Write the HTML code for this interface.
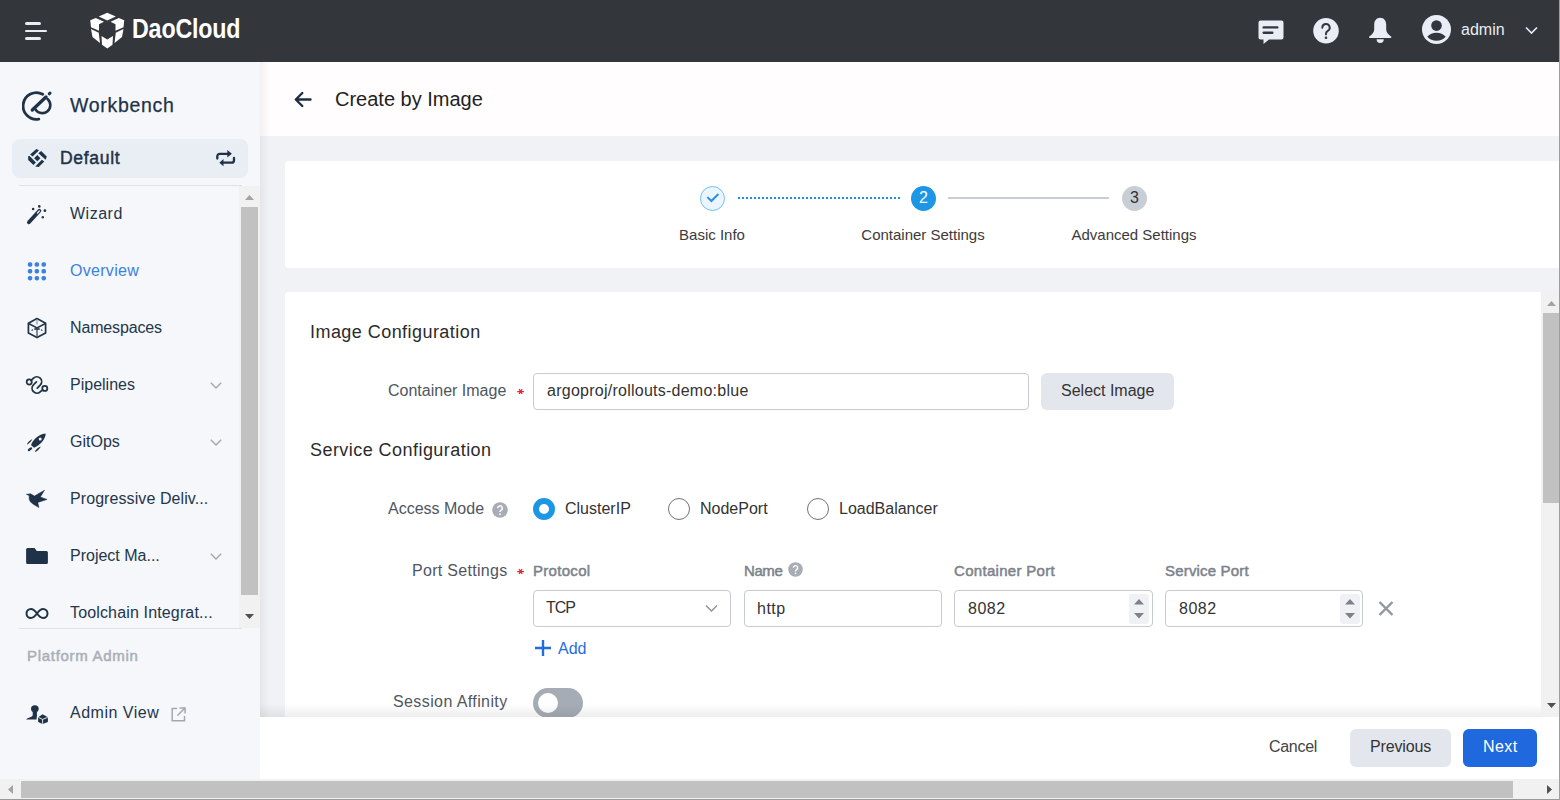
<!DOCTYPE html>
<html><head><meta charset="utf-8">
<style>
*{margin:0;padding:0;box-sizing:border-box}
html,body{width:1560px;height:800px;overflow:hidden;background:#f0f2f5;font-family:"Liberation Sans",sans-serif;color:#333}
.a{position:absolute}
.t{position:absolute;line-height:1;white-space:nowrap}
#hdr{left:0;top:0;width:1560px;height:62px;background:#33363b}
#side{left:0;top:62px;width:260px;height:717px;background:#f5f7fa}
#sideshadow{left:260px;top:62px;width:10px;height:717px;background:linear-gradient(90deg,rgba(0,0,0,0.05),rgba(0,0,0,0))}
#phead{left:260px;top:62px;width:1300px;height:74px;background:#fffdfd}
.card{background:#fff;border-radius:4px}
.mi{color:#24364a;font-size:16px}
.ico{position:absolute}
.lbl{color:#4f5660;font-size:16px}
.req{color:#e5312d;font-size:17px}
.inp{position:absolute;border:1px solid #c6cad3;border-radius:4px;background:#fff}
.th{color:#7d828b;font-size:15px;-webkit-text-stroke:0.5px #7d828b}
.btn2{position:absolute;background:#e3e6ed;border-radius:6px}
.sbtrack{position:absolute;background:#f1f1f1}
.sbthumb{position:absolute;background:#c1c1c1}
</style></head><body>
<!-- header -->
<div id="hdr" class="a"></div>
<div class="a" style="left:25px;top:22px;width:16px;height:3px;border-radius:2px;background:#e9edf5"></div>
<div class="a" style="left:25px;top:30px;width:22px;height:2px;border-radius:1px;background:#e9edf5"></div>
<div class="a" style="left:25px;top:37px;width:16px;height:3px;border-radius:2px;background:#e9edf5"></div>
<svg class="ico" style="left:88px;top:10px" width="40" height="40" viewBox="0 0 40 40">
 <g fill="#fff">
  <polygon points="10.75,6.5 19.25,2.75 27.75,6.5 19.25,10.5"/>
  <polygon points="2.25,10.25 7.75,8 16,11.75 11,14.25 11,20.75 3,17.25"/>
  <polygon points="36.25,10.25 30.75,8 22.5,11.75 27.5,14.25 27.5,20.75 35.5,17.25"/>
  <polygon points="3,19 10.75,22.75 12,33 4.5,27"/>
  <polygon points="35.5,19 27.75,22.75 26.5,33 34,27"/>
  <polygon points="13.5,26 19.25,29.5 25,26 24.5,34.75 19.25,38.5 14,34.75"/>
 </g>
</svg>
<div class="t" style="left:132px;top:15px;font-size:28px;font-weight:bold;color:#fff;transform:scaleX(0.83);transform-origin:0 0;letter-spacing:-0.2px">DaoCloud</div>
<!-- chat -->
<svg class="ico" style="left:1258px;top:20px" width="27" height="25" viewBox="0 0 27 25">
 <path d="M2.5 0.5h21a2 2 0 0 1 2 2v15a2 2 0 0 1-2 2H11l-5.5 4.5v-4.5h-3a2 2 0 0 1-2-2v-15a2 2 0 0 1 2-2z" fill="#e9edf5"/>
 <rect x="4.5" y="6.2" width="16" height="2.4" rx="1.2" fill="#33363b"/>
 <rect x="4.5" y="11.6" width="11" height="2.4" rx="1.2" fill="#33363b"/>
</svg>
<!-- help -->
<svg class="ico" style="left:1313px;top:18px" width="26" height="26" viewBox="0 0 26 26">
 <circle cx="13" cy="12.8" r="12.8" fill="#e9edf5"/>
 <path d="M9.3 9.7a3.7 3.7 0 1 1 5.5 3.2c-1.1.7-1.8 1.3-1.8 2.6v.9" fill="none" stroke="#33363b" stroke-width="1.9" stroke-linecap="round"/>
 <circle cx="13" cy="19.8" r="1.3" fill="#33363b"/>
</svg>
<!-- bell -->
<svg class="ico" style="left:1368px;top:17px" width="25" height="28" viewBox="0 0 25 28">
 <path d="M12.2 0.8C8.6 0.8 6.2 3.7 6.2 7.6V12.6C6.2 15.2 4.6 17.3 1.4 19.6 0.7 20.1 1 21 1.8 21H22.6C23.4 21 23.7 20.1 23 19.6 19.8 17.3 18.2 15.2 18.2 12.6V7.6C18.2 3.7 15.8 0.8 12.2 0.8Z" fill="#e9edf5"/>
 <path d="M8.6 22.3H15.8A3.6 3.6 0 0 1 8.6 22.3Z" fill="#e9edf5"/>
</svg>
<!-- user -->
<svg class="ico" style="left:1422px;top:15px" width="30" height="30" viewBox="0 0 30 30">
 <circle cx="14.5" cy="14.5" r="14.5" fill="#e9edf5"/>
 <circle cx="14.5" cy="10.6" r="5.3" fill="#33363b"/>
 <path d="M5.3 21.7c2.3-2.7 5.5-4 9.2-4s6.9 1.3 9.2 4c-2.3 2.6-5.5 4-9.2 4s-6.9-1.4-9.2-4z" fill="#33363b"/>
</svg>
<div class="t" style="left:1461px;top:22px;font-size:16px;color:#e9edf5">admin</div>
<svg class="ico" style="left:1525px;top:26px" width="13" height="9" viewBox="0 0 13 9">
 <path d="M1 1.5l5.5 5.5 5.5-5.5" fill="none" stroke="#e9edf5" stroke-width="1.6"/>
</svg>

<!-- sidebar -->
<div id="side" class="a"></div>
<!-- workbench -->
<svg class="ico" style="left:22px;top:91px" width="31" height="31" viewBox="0 0 31 31">
 <path d="M20.7 3.3A13.3 13.3 0 1 0 16.8 28.1" fill="none" stroke="#1f3247" stroke-width="2.8" stroke-linecap="round"/>
 <path d="M25.5 7.9A8.1 8.1 0 1 1 13.4 18.4" fill="none" stroke="#1f3247" stroke-width="2.6" stroke-linecap="round"/>
 <path d="M10.3 19L24 6" stroke="#1f3247" stroke-width="3.3" stroke-linecap="round"/>
 <path d="M27.3 2.8L28 2.1" stroke="#1f3247" stroke-width="3" stroke-linecap="round"/>
</svg>
<div class="t" style="left:70px;top:95.6px;font-size:19.5px;color:#1f3247;letter-spacing:0.7px;-webkit-text-stroke:0.25px #1f3247">Workbench</div>
<!-- default -->
<div class="a" style="left:12px;top:139px;width:236px;height:39px;border-radius:8px;background:#e9edf4"></div>
<svg class="ico" style="left:24px;top:144px" width="28" height="28" viewBox="0 0 28 28">
 <g fill="#1f3247">
  <polygon points="6.1,10.5 12.4,4.9 15.05,6.3 8.6,12.6"/>
  <polygon points="14.35,9.3 17.15,7.0 22.75,12.6 21.7,15.75"/>
  <polygon points="17.85,15.75 20.3,17.5 14.7,22.9 11.2,22.4"/>
  <polygon points="4.2,11.9 5.6,12.1 11.9,18.55 9.45,21 4.2,16.1"/>
  <polygon points="10.15,14.2 13.3,11.0 16.45,14.2 13.3,17.3"/>
 </g>
</svg>
<div class="t" style="left:60px;top:149.5px;font-size:17.6px;color:#1f3247;-webkit-text-stroke:0.45px #1f3247;letter-spacing:0.65px">Default</div>
<svg class="ico" style="left:212px;top:145px" width="28" height="26" viewBox="0 0 28 26">
 <path d="M5.3 13.6V11.3a2.5 2.5 0 0 1 2.5-2.5H16.5" fill="none" stroke="#1f3247" stroke-width="2.3" stroke-linecap="round"/>
 <path d="M15.3 5.1L19.9 8.8l-4.6 3.6z" fill="#1f3247"/>
 <path d="M22 13V15.2a2.5 2.5 0 0 1-2.5 2.5H11" fill="none" stroke="#1f3247" stroke-width="2.3" stroke-linecap="round"/>
 <path d="M11.5 14.1L7.3 17.7l4.2 3.6z" fill="#1f3247"/>
</svg>
<div class="a" style="left:19px;top:185px;width:223px;height:1px;background:#dde2ea"></div>
<div class="a" style="left:19px;top:628px;width:223px;height:1px;background:#dde2ea"></div>
<!-- sidebar scrollbar -->
<div class="sbtrack" style="left:239px;top:186px;width:21px;height:442px"></div>
<div class="sbthumb" style="left:241px;top:207px;width:17px;height:388px"></div>
<svg class="ico" style="left:244px;top:194px" width="11" height="7" viewBox="0 0 11 7"><path d="M5.5 1L10 6H1z" fill="#a3a3a3"/></svg>
<svg class="ico" style="left:244px;top:613px" width="11" height="7" viewBox="0 0 11 7"><path d="M1 1h9L5.5 6z" fill="#505050"/></svg>
<!-- menu items -->
<svg class="ico" style="left:22px;top:200px" width="30" height="30" viewBox="0 0 30 30">
 <path d="M6.9 22.3L17.4 10.8" stroke="#1f3247" stroke-width="3.8" stroke-linecap="round"/>
 <path d="M15.4 13.1L17.3 11" stroke="#f5f7fa" stroke-width="1.3" stroke-linecap="round"/>
 <circle cx="11.1" cy="9" r="1.25" fill="#1f3247"/><circle cx="17.3" cy="6.4" r="1.3" fill="#1f3247"/>
 <circle cx="22.9" cy="10.7" r="1.35" fill="#1f3247"/><circle cx="20.8" cy="17.25" r="1.2" fill="#1f3247"/>
</svg>
<div class="t mi" style="left:70px;top:206px;letter-spacing:0.5px">Wizard</div>
<svg class="ico" style="left:22px;top:256px" width="30" height="30" viewBox="0 0 30 30">
 <g fill="#3a81e0">
  <rect x="5.8" y="6.2" width="4.5" height="4.5" rx="1.8"/><rect x="12.6" y="6.2" width="4.5" height="4.5" rx="1.8"/><rect x="19.5" y="6.2" width="4.5" height="4.5" rx="1.8"/>
  <rect x="5.8" y="13" width="4.5" height="4.5" rx="1.8"/><rect x="12.6" y="13" width="4.5" height="4.5" rx="1.8"/><rect x="19.5" y="13" width="4.5" height="4.5" rx="1.8"/>
  <rect x="5.8" y="19.9" width="4.5" height="4.5" rx="1.8"/><rect x="12.6" y="19.9" width="4.5" height="4.5" rx="1.8"/><rect x="19.5" y="19.9" width="4.5" height="4.5" rx="1.8"/>
 </g>
</svg>
<div class="t mi" style="left:70px;top:263px;color:#3a81e0;letter-spacing:0.3px">Overview</div>
<svg class="ico" style="left:22px;top:313px" width="30" height="30" viewBox="0 0 30 30">
 <path d="M15 5.6L23.6 10.3V19.9L15 24.6 6.4 19.9V10.3z" fill="none" stroke="#1f3247" stroke-width="1.7" stroke-linejoin="round"/>
 <path d="M6.6 10.5L15 14.8l8.4-4.3" fill="none" stroke="#1f3247" stroke-width="1.5"/>
 <path d="M15 14.8V24.3" stroke="#4d5b6b" stroke-width="1.4"/>
 <path d="M15 6.5V11.5" stroke="#8892a0" stroke-width="1.1"/>
 <path d="M12.6 15.6L17.4 16.4M17.4 15.6L12.6 16.4" stroke="#1f3247" stroke-width="1"/>
 <path d="M9.6 17.6L12.6 16M20.4 17.6L17.4 16" stroke="#1f3247" stroke-width="1.1" stroke-dasharray="1.6 1.2"/>
</svg>
<div class="t mi" style="left:70px;top:320px;letter-spacing:-0.15px">Namespaces</div>
<svg class="ico" style="left:22px;top:370px" width="30" height="30" viewBox="0 0 30 30">
 <g fill="none" stroke="#1f3247" stroke-width="1.75" stroke-linecap="round">
  <circle cx="7.2" cy="12" r="2.55"/>
  <circle cx="22.8" cy="18.4" r="2.55"/>
  <path d="M9.2 10.4L11.5 8.1A4.85 4.85 0 0 1 18.4 14.9L15.3 18.1"/>
  <path d="M14.4 11.9L11.3 15A4.85 4.85 0 0 0 18.2 21.8L20.8 19.9"/>
 </g>
</svg>
<div class="t mi" style="left:70px;top:377px">Pipelines</div>
<svg class="ico" style="left:210px;top:382px" width="12" height="7" viewBox="0 0 12 7"><path d="M0.8 0.8L6 6l5.2-5.2" fill="none" stroke="#a3a8b0" stroke-width="1.4"/></svg>
<svg class="ico" style="left:22px;top:428px" width="30" height="30" viewBox="0 0 30 30">
 <path d="M9 17.1C10.5 12.5 15.5 6.5 23.7 5.5 23.5 10.5 19 17 12 19.7Z" fill="#1f3247"/>
 <circle cx="18.2" cy="11.1" r="1.5" fill="#f5f7fa"/>
 <path d="M4.9 16.4C5.6 14.6 7.6 12.2 10.3 10.9 9.6 12.6 7.8 15 5.4 16.6Z M13 23.7C13.5 21.8 15.8 19.3 18.8 18.4 18.1 20.2 15.6 22.7 13.4 23.9Z" fill="#1f3247"/>
 <path d="M6.9 22L9.1 20.4" stroke="#1f3247" stroke-width="2.2" stroke-linecap="round"/>
</svg>
<div class="t mi" style="left:70px;top:434px">GitOps</div>
<svg class="ico" style="left:210px;top:439px" width="12" height="7" viewBox="0 0 12 7"><path d="M0.8 0.8L6 6l5.2-5.2" fill="none" stroke="#a3a8b0" stroke-width="1.4"/></svg>
<svg class="ico" style="left:22px;top:484px" width="30" height="30" viewBox="0 0 30 30">
 <path d="M4.3 10.3L8.6 9.8 12.4 12 22.5 6.2 18.4 13.1 25.1 15.4 15.8 18.4 16.9 23.6 11.3 20.3 8.3 17.8 7.2 15.2 7.1 11.6Z" fill="#1f3247" stroke="#1f3247" stroke-width="0.5" stroke-linejoin="round"/>
</svg>
<div class="t mi" style="left:70px;top:491px;letter-spacing:0.08px">Progressive Deliv...</div>
<svg class="ico" style="left:22px;top:541px" width="30" height="30" viewBox="0 0 30 30">
 <path d="M5.6 7.1H12.6L14.8 10H24.4A1.5 1.5 0 0 1 25.9 11.5V21.6A1.5 1.5 0 0 1 24.4 23.1H5.6A1.5 1.5 0 0 1 4.1 21.6V8.6A1.5 1.5 0 0 1 5.6 7.1Z" fill="#1f3348"/>
</svg>
<div class="t mi" style="left:70px;top:548px">Project Ma...</div>
<svg class="ico" style="left:210px;top:553px" width="12" height="7" viewBox="0 0 12 7"><path d="M0.8 0.8L6 6l5.2-5.2" fill="none" stroke="#a3a8b0" stroke-width="1.4"/></svg>
<svg class="ico" style="left:25px;top:607px" width="24" height="13" viewBox="0 0 24 13">
 <path d="M12 6.5C9.9 3.6 8.2 2 6 2a4.5 4.5 0 0 0 0 9c2.2 0 3.9-1.6 6-4.5 2.1-2.9 3.8-4.5 6-4.5a4.5 4.5 0 0 1 0 9c-2.2 0-3.9-1.6-6-4.5z" fill="none" stroke="#1f3247" stroke-width="2"/>
</svg>
<div class="t mi" style="left:70px;top:605px;letter-spacing:0.15px">Toolchain Integrat...</div>
<div class="t" style="left:27px;top:648px;font-size:15px;color:#a9afb8;-webkit-text-stroke:0.5px #a9afb8;letter-spacing:0.7px">Platform Admin</div>
<svg class="ico" style="left:22px;top:699px" width="30" height="30" viewBox="0 0 30 30">
 <ellipse cx="12.85" cy="9.75" rx="3.85" ry="3.6" fill="#1f3247"/>
 <path d="M4.1 20.6C5 19.2 8.6 18.2 10.2 17.3 10.8 16.5 10.9 15.5 10.6 12.8H15.1C14.8 14.4 14.8 15.6 15 16.6L14.5 20.6Z" fill="#1f3247"/>
 <path d="M20.6 15.2L25.9 18.3V22.9L20.6 25 16.1 22.9V18.3Z" fill="#1f3247"/>
 <path d="M16.4 18.4L20.6 20.4 25.6 18.4M20.6 20.4V24.8" fill="none" stroke="#f5f7fa" stroke-width="0.9"/>
</svg>
<div class="t mi" style="left:70px;top:705px;letter-spacing:0.5px">Admin View</div>
<svg class="ico" style="left:171px;top:707px" width="15" height="15" viewBox="0 0 15 15">
 <path d="M6 1.5H1.2v12.3h12.3V9" fill="none" stroke="#a3a8b0" stroke-width="1.5"/>
 <path d="M8.5 0.9h5.6v5.6M14 1L6.5 8.5" fill="none" stroke="#a3a8b0" stroke-width="1.5"/>
</svg>

<!-- page header -->
<div id="phead" class="a"></div>
<div id="sideshadow" class="a"></div>
<!-- page header content -->
<svg class="ico" style="left:294px;top:91px" width="18" height="17" viewBox="0 0 18 17">
 <path d="M16.5 8.5H2.5M8.3 2L1.8 8.5 8.3 15" fill="none" stroke="#1d2e42" stroke-width="2.4" stroke-linecap="round" stroke-linejoin="round"/>
</svg>
<div class="t" style="left:335px;top:89px;font-size:20px;color:#1f1f1f">Create by Image</div>

<!-- stepper card -->
<div class="a card" style="left:285px;top:161px;width:1280px;height:107px"></div>
<div class="a" style="left:700px;top:186px;width:25px;height:25px;border-radius:50%;border:1px solid #72c2f3;background:#eaf5fd"></div>
<svg class="ico" style="left:700px;top:186px" width="25" height="25" viewBox="0 0 25 25"><path d="M7.4 11.1l4 3.9 7-7" fill="none" stroke="#2b8fe6" stroke-width="2"/></svg>
<div class="a" style="left:738px;top:197px;width:162px;height:2px;background:repeating-linear-gradient(90deg,#1b8fe4 0 2px,transparent 2px 4px)"></div>
<div class="a" style="left:911px;top:186px;width:25px;height:25px;border-radius:50%;background:#1e96e6"></div>
<div class="t" style="left:911px;top:189.5px;width:25px;text-align:center;font-size:16px;color:#fff">2</div>
<div class="a" style="left:948px;top:197px;width:161px;height:2px;background:#c9cdd6"></div>
<div class="a" style="left:1122px;top:186px;width:25px;height:25px;border-radius:50%;background:#c9cdd6"></div>
<div class="t" style="left:1122px;top:189.5px;width:25px;text-align:center;font-size:16px;color:#333">3</div>
<div class="t" style="left:612px;top:227px;width:200px;text-align:center;font-size:15px;color:#3b3b3b">Basic Info</div>
<div class="t" style="left:823px;top:227px;width:200px;text-align:center;font-size:15px;color:#3b3b3b">Container Settings</div>
<div class="t" style="left:1034px;top:227px;width:200px;text-align:center;font-size:15px;color:#3b3b3b">Advanced Settings</div>

<!-- form card -->
<div class="a card" style="left:285px;top:292px;width:1280px;height:430px"></div>
<div class="t" style="left:310px;top:323px;font-size:18px;color:#2b2b2b;letter-spacing:0.45px">Image Configuration</div>
<div class="t lbl" style="left:388px;top:383px">Container Image</div>
<svg class="ico" style="left:517px;top:388px" width="8" height="6" viewBox="0 0 8 6"><path d="M0.2 3.5H7M2.1 1L5.1 6M5.1 1L2.1 6" stroke="#e8262b" stroke-width="1.25"/></svg>
<div class="inp" style="left:533px;top:373px;width:496px;height:37px"></div>
<div class="t" style="left:547px;top:383px;font-size:16px;color:#333;letter-spacing:0.25px">argoproj/rollouts-demo:blue</div>
<div class="btn2" style="left:1041px;top:373px;width:133px;height:37px"></div>
<div class="t" style="left:1061px;top:383px;font-size:16px;color:#333">Select Image</div>

<div class="t" style="left:310px;top:441px;font-size:18px;color:#2b2b2b;letter-spacing:0.45px">Service Configuration</div>
<div class="t lbl" style="left:388px;top:501px">Access Mode</div>
<svg class="ico" style="left:492px;top:502px" width="16" height="16" viewBox="0 0 16 16">
 <circle cx="8" cy="8" r="7.8" fill="#a8acb4"/>
 <path d="M5.7 6.2a2.3 2.3 0 1 1 3.4 2c-.7.4-1.1.8-1.1 1.5v.4" fill="none" stroke="#fff" stroke-width="1.5"/>
 <circle cx="8" cy="12.2" r="0.9" fill="#fff"/>
</svg>
<div class="a" style="left:533px;top:498px;width:22px;height:22px;border-radius:50%;border:6px solid #1e96e6;background:#fff"></div>
<div class="t" style="left:565px;top:501px;font-size:16px;color:#333">ClusterIP</div>
<div class="a" style="left:668px;top:498px;width:22px;height:22px;border-radius:50%;border:1px solid #6e737a;background:#fff"></div>
<div class="t" style="left:700px;top:501px;font-size:16px;color:#333">NodePort</div>
<div class="a" style="left:807px;top:498px;width:22px;height:22px;border-radius:50%;border:1px solid #6e737a;background:#fff"></div>
<div class="t" style="left:839px;top:501px;font-size:16px;color:#333">LoadBalancer</div>

<div class="t lbl" style="left:412px;top:563px;letter-spacing:0.3px">Port Settings</div>
<svg class="ico" style="left:517px;top:568px" width="8" height="6" viewBox="0 0 8 6"><path d="M0.2 3.5H7M2.1 1L5.1 6M5.1 1L2.1 6" stroke="#e8262b" stroke-width="1.25"/></svg>
<div class="t th" style="left:533px;top:563px;letter-spacing:0.3px">Protocol</div>
<div class="t th" style="left:744px;top:563px;letter-spacing:-0.4px">Name</div>
<svg class="ico" style="left:788px;top:562px" width="15" height="15" viewBox="0 0 16 16">
 <circle cx="8" cy="8" r="7.8" fill="#a8acb4"/>
 <path d="M5.7 6.2a2.3 2.3 0 1 1 3.4 2c-.7.4-1.1.8-1.1 1.5v.4" fill="none" stroke="#fff" stroke-width="1.5"/>
 <circle cx="8" cy="12.2" r="0.9" fill="#fff"/>
</svg>
<div class="t th" style="left:954px;top:563px;letter-spacing:0.3px">Container Port</div>
<div class="t th" style="left:1165px;top:563px;letter-spacing:0.18px">Service Port</div>

<div class="inp" style="left:533px;top:590px;width:198px;height:37px"></div>
<div class="t" style="left:546px;top:600px;font-size:16px;color:#333;letter-spacing:-1px">TCP</div>
<svg class="ico" style="left:705px;top:604px" width="13" height="9" viewBox="0 0 13 9"><path d="M1 1.5l5.5 5.5 5.5-5.5" fill="none" stroke="#8a8f98" stroke-width="1.3"/></svg>
<div class="inp" style="left:744px;top:590px;width:198px;height:37px"></div>
<div class="t" style="left:757px;top:601px;font-size:16px;color:#333;letter-spacing:0.5px">http</div>
<div class="inp" style="left:954px;top:590px;width:199px;height:37px"></div>
<div class="t" style="left:968px;top:600.6px;font-size:16px;color:#333;letter-spacing:0.5px">8082</div>
<div class="a" style="left:1129px;top:594px;width:20px;height:30px;border-radius:3px;background:#f0f1f4"></div>
<svg class="ico" style="left:1129px;top:594px" width="20" height="30" viewBox="0 0 20 30">
 <path d="M5 10.5l5-5.5 5 5.5z M5 19l5 5.5 5-5.5z" fill="#7d828a"/>
</svg>
<div class="inp" style="left:1165px;top:590px;width:198px;height:37px"></div>
<div class="t" style="left:1179px;top:600.6px;font-size:16px;color:#333;letter-spacing:0.5px">8082</div>
<div class="a" style="left:1340px;top:594px;width:20px;height:30px;border-radius:3px;background:#f0f1f4"></div>
<svg class="ico" style="left:1340px;top:594px" width="20" height="30" viewBox="0 0 20 30">
 <path d="M5 10.5l5-5.5 5 5.5z M5 19l5 5.5 5-5.5z" fill="#7d828a"/>
</svg>
<svg class="ico" style="left:1378px;top:601px" width="16" height="15" viewBox="0 0 16 15">
 <path d="M1.5 1l13 13M14.5 1l-13 13" stroke="#9196a0" stroke-width="2.4"/>
</svg>
<svg class="ico" style="left:534px;top:639px" width="18" height="18" viewBox="0 0 18 18">
 <path d="M9 1v16M1 9h16" stroke="#1f6ddf" stroke-width="2.4"/>
</svg>
<div class="t" style="left:558px;top:641px;font-size:16px;color:#1f6ddf">Add</div>

<div class="t lbl" style="left:393px;top:694px;letter-spacing:0.4px">Session Affinity</div>
<div class="a" style="left:533px;top:688px;width:50px;height:30px;border-radius:15px;background:#a6acb5"></div>
<div class="a" style="left:537.6px;top:692.7px;width:20.5px;height:20.5px;border-radius:50%;background:#fff"></div>

<!-- footer -->
<div class="a" style="left:260px;top:717px;width:1300px;height:62px;background:#fff"></div>
<div class="a" style="left:260px;top:704px;width:1300px;height:13px;background:linear-gradient(180deg,rgba(0,0,0,0),rgba(0,0,0,0.07))"></div>
<div class="t" style="left:1269px;top:739px;font-size:16px;color:#444;letter-spacing:-0.3px">Cancel</div>
<div class="btn2" style="left:1350px;top:729px;width:101px;height:38px"></div>
<div class="t" style="left:1370px;top:739px;font-size:16px;color:#333;letter-spacing:-0.15px">Previous</div>
<div class="a" style="left:1463px;top:729px;width:74px;height:38px;border-radius:6px;background:#2068dd"></div>
<div class="t" style="left:1483px;top:739px;font-size:16px;color:#fff;letter-spacing:0.4px">Next</div>
<!-- right scrollbar -->
<div class="sbtrack" style="left:1541px;top:292px;width:21px;height:425px"></div>
<div class="sbthumb" style="left:1543px;top:313px;width:17px;height:190px"></div>
<svg class="ico" style="left:1546px;top:300px" width="11" height="7" viewBox="0 0 11 7"><path d="M5.5 1L10 6H1z" fill="#a3a3a3"/></svg>
<svg class="ico" style="left:1546px;top:702px" width="11" height="7" viewBox="0 0 11 7"><path d="M1 1h9L5.5 6z" fill="#505050"/></svg>

<!-- horizontal scrollbar -->
<div class="sbtrack" style="left:0;top:779px;width:1560px;height:20px"></div>
<div class="sbthumb" style="left:21px;top:781px;width:1492px;height:17px"></div>
<div class="a" style="left:0;top:799px;width:1560px;height:1px;background:#9a9a9a"></div>
<svg class="ico" style="left:7px;top:784px" width="7" height="11" viewBox="0 0 7 11"><path d="M6 1v9L1 5.5z" fill="#a3a3a3"/></svg>
<svg class="ico" style="left:1546px;top:784px" width="7" height="11" viewBox="0 0 7 11"><path d="M1 1v9l5-4.5z" fill="#505050"/></svg>
<div class="a" style="left:1559px;top:0;width:1px;height:800px;background:#9e9e9e"></div>
</body></html>
